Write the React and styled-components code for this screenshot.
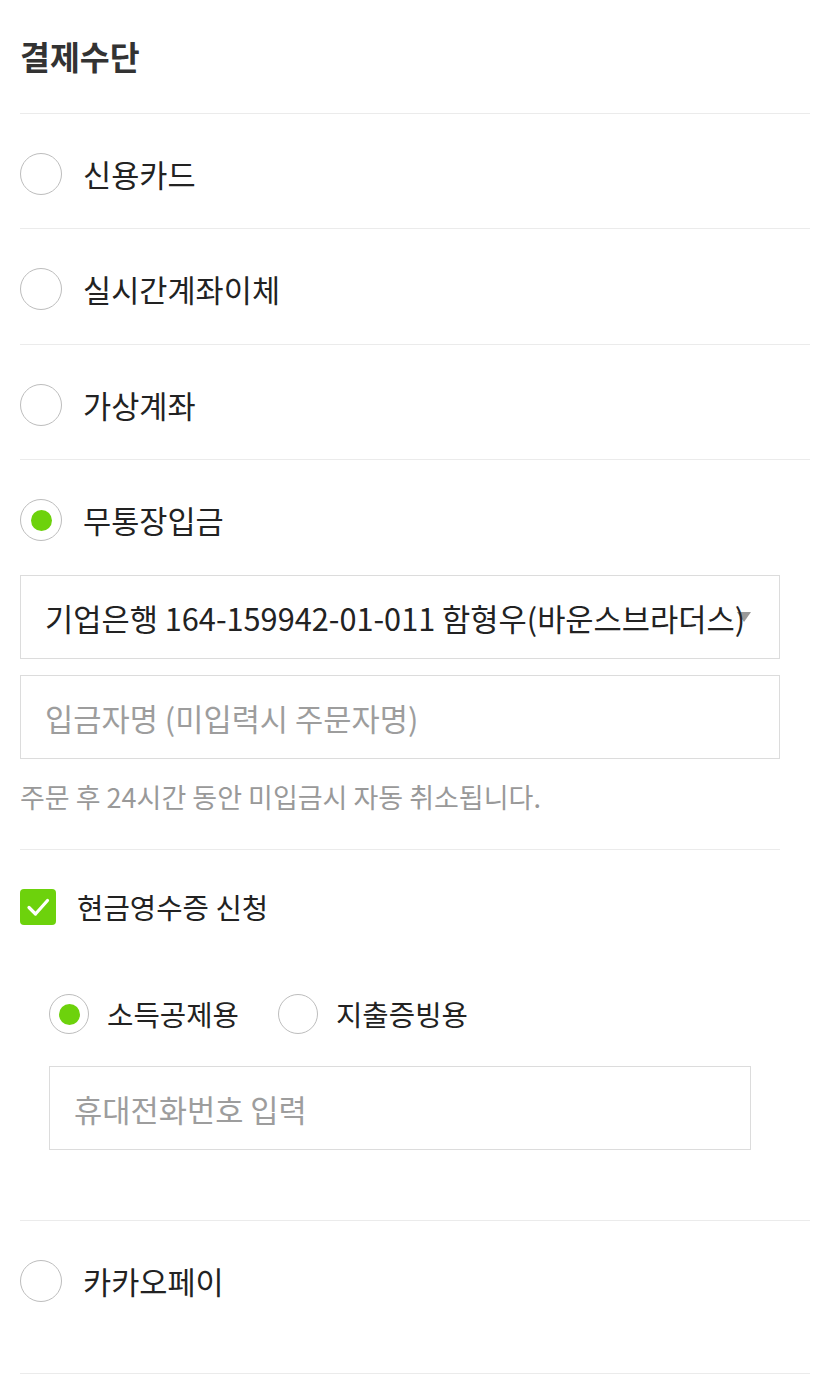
import React from 'react'
import styled, { createGlobalStyle } from 'styled-components'

const GlobalStyle = createGlobalStyle`
    * { box-sizing: border-box; }
    body {
        margin: 0;
        background: #fff;
        font-family: "Noto Sans CJK KR", "Noto Sans", sans-serif;
        color: #222;
    }
`

const Page = styled.div`
    padding: 0 14px 0 20px;
`

const Header = styled.div`
    height: 114px;
    padding-bottom: 3px;
    display: flex;
    align-items: center;
    border-bottom: 1px solid #ebebeb;
`

const Title = styled.h2`
    margin: 0;
    font-size: 32.5px;
    font-weight: 700;
    color: #333;
`

const Method = styled.div`
    padding: 39px 0 ${props => props.open ? '0' : props.last ? '71px' : '33px'};
    border-bottom: 1px solid #ebebeb;
`

const RadioRow = styled.label`
    display: flex;
    align-items: center;
    gap: ${props => props.small ? '18px' : '21px'};
`

const RadioCircle = styled.span`
    flex: none;
    width: ${props => props.size}px;
    height: ${props => props.size}px;
    border-radius: 50%;
    border: 1px solid #bdbdbd;
    display: flex;
    align-items: center;
    justify-content: center;
    background: #fff;

    &::after {
        content: '';
        width: 21px;
        height: 21px;
        border-radius: 50%;
        background: #6dd20c;
        display: ${props => props.checked ? 'block' : 'none'};
    }
`

const Label = styled.span`
    font-size: ${props => props.small ? '28.7px' : '30.6px'};
    line-height: ${props => props.small ? '36px' : '42.3px'};
    color: #222;
`

const Panel = styled.div`
    width: 760px;
    margin-top: 34px;
`

const SelectBox = styled.div`
    position: relative;
    height: 84px;
    border: 1px solid #dcdcdc;
    padding: 0 24px;
    display: flex;
    align-items: center;
    font-size: 30.7px;
    color: #222;
    white-space: nowrap;

    &::after {
        content: '';
        position: absolute;
        right: 28px;
        top: 36px;
        border-left: 7px solid transparent;
        border-right: 7px solid transparent;
        border-top: 10px solid #999;
    }
`

const SelectText = styled.span`
    position: relative;
    z-index: 1;
`

const TextInput = styled.input`
    display: block;
    width: ${props => props.width || '100%'};
    height: 84px;
    margin: ${props => props.margin || '16px 0 0'};
    border: 1px solid #dcdcdc;
    padding: 0 24px;
    font-family: inherit;
    font-size: 30.7px;
    color: #222;
    outline: none;

    &::placeholder {
        color: #9d9d9d;
    }
`

const Note = styled.p`
    margin: 20px 0 0;
    font-size: 27px;
    line-height: 36px;
    color: #999;
`

const Receipt = styled.div`
    margin-top: 34px;
    border-top: 1px solid #ebebeb;
    padding: 39px 0 70px;
`

const CheckRow = styled.label`
    display: flex;
    align-items: center;
    gap: 21px;
`

const CheckBox = styled.span`
    flex: none;
    width: 36px;
    height: 36px;
    border-radius: 4px;
    background: #6dd20c;
    display: flex;
    align-items: center;
    justify-content: center;
`

const SubOptions = styled.div`
    display: flex;
    align-items: center;
    gap: 39px;
    margin: 69px 0 0 29px;
`

const CheckIcon = () => (
    <svg width="30" height="30" viewBox="0 0 30 30" fill="none">
        <path d="M6 15.5l6.5 6.5L24.5 8.5" stroke="#fff" strokeWidth="3.2" strokeLinecap="round" strokeLinejoin="round"/>
    </svg>
)

const Radio = ({ checked, small, children }) => (
    <RadioRow small={small}>
        <RadioCircle size={small ? 40 : 42} checked={checked}/>
        <Label small={small}>{children}</Label>
    </RadioRow>
)

const methods = ['신용카드', '실시간계좌이체', '가상계좌']

export default function App() {
    return (
        <Page>
            <GlobalStyle/>
            <Header>
                <Title>결제수단</Title>
            </Header>

            {methods.map(name => (
                <Method key={name}>
                    <Radio>{name}</Radio>
                </Method>
            ))}

            {/* selected method opens its panel */}
            <Method open>
                <Radio checked>무통장입금</Radio>
                <Panel>
                    <SelectBox>
                        <SelectText>기업은행 164-159942-01-011 함형우(바운스브라더스)</SelectText>
                    </SelectBox>
                    <TextInput placeholder="입금자명 (미입력시 주문자명)"/>
                    <Note>주문 후 24시간 동안 미입금시 자동 취소됩니다.</Note>
                    <Receipt>
                        <CheckRow>
                            <CheckBox><CheckIcon/></CheckBox>
                            <Label small>현금영수증 신청</Label>
                        </CheckRow>
                        <SubOptions>
                            <Radio small checked>소득공제용</Radio>
                            <Radio small>지출증빙용</Radio>
                        </SubOptions>
                        <TextInput width="702px" margin="32px 0 0 29px" placeholder="휴대전화번호 입력"/>
                    </Receipt>
                </Panel>
            </Method>

            <Method last>
                <Radio>카카오페이</Radio>
            </Method>
        </Page>
    )
}
